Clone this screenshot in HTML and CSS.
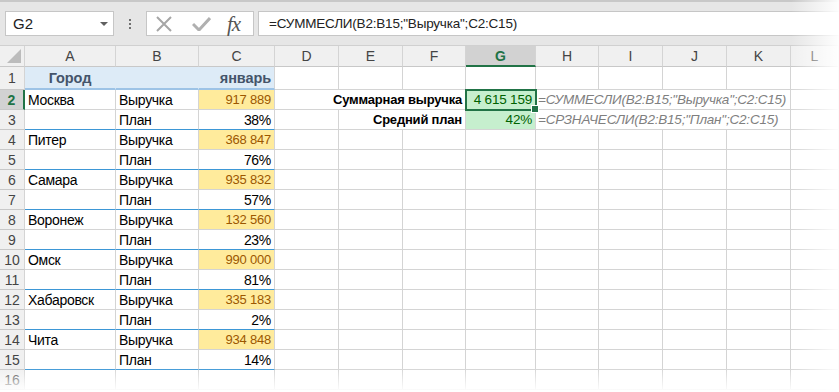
FILE: index.html
```html
<!DOCTYPE html>
<html lang="ru">
<head>
    <meta charset="UTF-8">
    <title>СУММЕСЛИ</title>
    <link rel="stylesheet" href="styles.css">
</head>
<body>
    <div class="toolbar">
        <div class="namebox"><span>G2</span><span class="caret"></span></div>
        <div class="dots"><span></span><span></span><span></span></div>
        <div class="fxbox">
            <svg class="ico" width="18" height="16" viewBox="0 0 18 16"><path d="M2 1 L16 15 M16 1 L2 15" stroke="#a6a6a6" stroke-width="2" fill="none"/></svg>
            <svg class="ico" width="19" height="14" viewBox="0 0 19 14"><path d="M1 7 L7 13 L18 1" stroke="#b0b0b0" stroke-width="3" fill="none"/></svg>
            <span class="fx">fx</span>
        </div>
        <div class="formula">=СУММЕСЛИ(B2:B15;"Выручка";C2:C15)</div>
    </div>

    <div class="sheet">
        <div class="ch corner"></div>
        <div class="ch">A</div><div class="ch">B</div><div class="ch">C</div><div class="ch">D</div><div class="ch">E</div><div class="ch">F</div>
        <div class="ch sel">G</div><div class="ch">H</div><div class="ch">I</div><div class="ch">J</div><div class="ch">K</div><div class="ch">L</div>

        <div class="rh">1</div>
        <div class="c head center">Город</div><div class="c head"></div><div class="c head right">январь</div>
        <div class="c"></div><div class="c"></div><div class="c"></div><div class="c"></div><div class="c"></div><div class="c"></div><div class="c"></div><div class="c"></div><div class="c"></div>

        <div class="rh sel">2</div>
        <div class="c">Москва</div><div class="c">Выручка</div><div class="c rev">917 889</div>
        <div class="c span3 right bold">Суммарная выручка</div>
        <div class="c good active">4 615 159</div>
        <div class="c span4 note">=СУММЕСЛИ(B2:B15;"Выручка";C2:C15)</div>
        <div class="c"></div>

        <div class="rh">3</div>
        <div class="c grp"></div><div class="c grp">План</div><div class="c grp right">38%</div>
        <div class="c"></div>
        <div class="c span2 right bold">Средний план</div>
        <div class="c good">42%</div>
        <div class="c span4 note">=СРЗНАЧЕСЛИ(B2:B15;"План";C2:C15)</div>
        <div class="c"></div>

        <div class="rh">4</div>
        <div class="c">Питер</div><div class="c">Выручка</div><div class="c rev">368 847</div>
        <div class="c"></div><div class="c"></div><div class="c"></div><div class="c"></div><div class="c"></div><div class="c"></div><div class="c"></div><div class="c"></div><div class="c"></div>

        <div class="rh">5</div>
        <div class="c grp"></div><div class="c grp">План</div><div class="c grp right">76%</div>
        <div class="c"></div><div class="c"></div><div class="c"></div><div class="c"></div><div class="c"></div><div class="c"></div><div class="c"></div><div class="c"></div><div class="c"></div>

        <div class="rh">6</div>
        <div class="c">Самара</div><div class="c">Выручка</div><div class="c rev">935 832</div>
        <div class="c"></div><div class="c"></div><div class="c"></div><div class="c"></div><div class="c"></div><div class="c"></div><div class="c"></div><div class="c"></div><div class="c"></div>

        <div class="rh">7</div>
        <div class="c grp"></div><div class="c grp">План</div><div class="c grp right">57%</div>
        <div class="c"></div><div class="c"></div><div class="c"></div><div class="c"></div><div class="c"></div><div class="c"></div><div class="c"></div><div class="c"></div><div class="c"></div>

        <div class="rh">8</div>
        <div class="c">Воронеж</div><div class="c">Выручка</div><div class="c rev">132 560</div>
        <div class="c"></div><div class="c"></div><div class="c"></div><div class="c"></div><div class="c"></div><div class="c"></div><div class="c"></div><div class="c"></div><div class="c"></div>

        <div class="rh">9</div>
        <div class="c grp"></div><div class="c grp">План</div><div class="c grp right">23%</div>
        <div class="c"></div><div class="c"></div><div class="c"></div><div class="c"></div><div class="c"></div><div class="c"></div><div class="c"></div><div class="c"></div><div class="c"></div>

        <div class="rh">10</div>
        <div class="c">Омск</div><div class="c">Выручка</div><div class="c rev">990 000</div>
        <div class="c"></div><div class="c"></div><div class="c"></div><div class="c"></div><div class="c"></div><div class="c"></div><div class="c"></div><div class="c"></div><div class="c"></div>

        <div class="rh">11</div>
        <div class="c grp"></div><div class="c grp">План</div><div class="c grp right">81%</div>
        <div class="c"></div><div class="c"></div><div class="c"></div><div class="c"></div><div class="c"></div><div class="c"></div><div class="c"></div><div class="c"></div><div class="c"></div>

        <div class="rh">12</div>
        <div class="c">Хабаровск</div><div class="c">Выручка</div><div class="c rev">335 183</div>
        <div class="c"></div><div class="c"></div><div class="c"></div><div class="c"></div><div class="c"></div><div class="c"></div><div class="c"></div><div class="c"></div><div class="c"></div>

        <div class="rh">13</div>
        <div class="c grp"></div><div class="c grp">План</div><div class="c grp right">2%</div>
        <div class="c"></div><div class="c"></div><div class="c"></div><div class="c"></div><div class="c"></div><div class="c"></div><div class="c"></div><div class="c"></div><div class="c"></div>

        <div class="rh">14</div>
        <div class="c">Чита</div><div class="c">Выручка</div><div class="c rev">934 848</div>
        <div class="c"></div><div class="c"></div><div class="c"></div><div class="c"></div><div class="c"></div><div class="c"></div><div class="c"></div><div class="c"></div><div class="c"></div>

        <div class="rh">15</div>
        <div class="c grp"></div><div class="c grp">План</div><div class="c grp right">14%</div>
        <div class="c"></div><div class="c"></div><div class="c"></div><div class="c"></div><div class="c"></div><div class="c"></div><div class="c"></div><div class="c"></div><div class="c"></div>

        <div class="rh">16</div>
        <div class="c"></div><div class="c"></div><div class="c"></div><div class="c"></div><div class="c"></div><div class="c"></div><div class="c"></div><div class="c"></div><div class="c"></div><div class="c"></div><div class="c"></div><div class="c"></div>
    </div>

    <div class="fade-right"></div>
    <div class="fade-bottom"></div>
</body>
</html>
```

FILE: styles.css
```css
* {
    box-sizing: border-box;
}
body {
    margin: 0;
    width: 839px;
    height: 392px;
    overflow: hidden;
    position: relative;
    background: #fff;
    font-family: "Liberation Sans", Arial, sans-serif;
    color: #000;
}

/* formula bar */
.toolbar {
    height: 46px;
    background: #e6e6e6;
    border-top: 2px solid #c8c8c8;
    border-bottom: 1px solid #d0d0d0;
    display: flex;
    align-items: flex-start;
    padding: 9px 0 0 5px;
}
.namebox {
    width: 109px;
    height: 25px;
    background: #fff;
    border: 1px solid #c6c6c6;
    display: flex;
    align-items: center;
    justify-content: space-between;
    padding: 0 5px 0 7px;
    font-size: 15px;
    color: #222;
}
.caret {
    border-left: 4px solid transparent;
    border-right: 4px solid transparent;
    border-top: 4px solid #606060;
}
.dots {
    width: 32px;
    height: 25px;
    display: flex;
    flex-direction: column;
    align-items: center;
    justify-content: center;
    gap: 2px;
}
.dots span {
    width: 2px;
    height: 2px;
    background: #707070;
}
.fxbox {
    width: 108px;
    height: 25px;
    background: #fff;
    border: 1px solid #c6c6c6;
    display: flex;
    align-items: center;
    padding-left: 8px;
}
.ico {
    display: block;
}
.fxbox .ico:first-child {
    margin-right: 19px;
}
.fxbox .ico + .ico {
    margin-right: 16px;
}
.fx {
    font-family: "Liberation Serif", serif;
    font-style: italic;
    font-size: 21px;
    color: #555;
    letter-spacing: -1px;
    line-height: 20px;
}
.formula {
    flex: 1;
    height: 25px;
    margin-left: 4px;
    background: #fff;
    border: 1px solid #c6c6c6;
    border-right: none;
    padding-left: 10px;
    font-size: 13.5px;
    letter-spacing: -0.2px;
    line-height: 23px;
    color: #222;
    white-space: nowrap;
}

/* grid */
.sheet {
    display: grid;
    grid-template-columns: 25px 91px 83px 76px 64px 64px 63px 70px 63px 64px 64px 64px 1fr;
    grid-template-rows: 21px 23px repeat(15, 20px);
    font-size: 13px;
}
.ch, .rh {
    background: #f0f0f0;
    color: #444;
    border-right: 1px solid #d4d4d4;
    border-bottom: 1px solid #c8c8c8;
    display: flex;
    align-items: center;
    justify-content: center;
    font-size: 14px;
}
.corner {
    position: relative;
}
.corner::after {
    content: "";
    position: absolute;
    right: 3px;
    bottom: 3px;
    border-left: 14px solid transparent;
    border-bottom: 14px solid #bcbcbc;
}
.ch.sel {
    background: #d2d2d2;
    color: #217346;
    font-weight: bold;
    border-bottom: 2px solid #217346;
}
.rh.sel {
    background: #d2d2d2;
    color: #217346;
    font-weight: bold;
    border-right: 2px solid #217346;
}
.c {
    border-right: 1px solid #d4d4d4;
    border-bottom: 1px solid #d4d4d4;
    display: flex;
    align-items: center;
    padding: 0 3px;
    white-space: nowrap;
    font-size: 14px;
    letter-spacing: -0.3px;
}
.right {
    justify-content: flex-end;
}
.center {
    justify-content: center;
}
.bold {
    font-weight: bold;
    font-size: 13px;
    letter-spacing: -0.2px;
}
.span2 {
    grid-column: span 2;
}
.span3 {
    grid-column: span 3;
}
.span4 {
    grid-column: span 4;
}
.head {
    background: #ddebf7;
    border-right-color: #ddebf7;
    border-bottom: 2px solid #9dc3e6;
    color: #44546a;
    font-weight: bold;
    font-size: 14.5px;
    letter-spacing: -0.1px;
}
.head.right {
    border-right-color: #d4d4d4;
}
.rev {
    background: #ffeb9c;
    color: #9c5700;
    justify-content: flex-end;
    font-size: 13px;
    letter-spacing: -0.2px;
}
.grp {
    border-bottom-color: #3d97d6;
}
.good {
    background: #c6efce;
    color: #006100;
    justify-content: flex-end;
    font-size: 13.5px;
    letter-spacing: -0.2px;
}
.active {
    position: relative;
    outline: 2px solid #217346;
    outline-offset: -1px;
    z-index: 1;
}
.active::after {
    content: "";
    position: absolute;
    right: -4px;
    bottom: -4px;
    width: 6px;
    height: 6px;
    background: #217346;
    border: 1px solid #fff;
}
.note {
    font-style: italic;
    color: #7f7f7f;
    padding-left: 2px;
    font-size: 13.5px;
    letter-spacing: -0.2px;
}

/* torn edge fade */
.fade-right {
    position: absolute;
    top: 0;
    right: 0;
    width: 48px;
    height: 100%;
    background: linear-gradient(to right, rgba(255, 255, 255, 0), rgba(255, 255, 255, 0.95));
}
.fade-bottom {
    position: absolute;
    left: 0;
    bottom: 0;
    width: 100%;
    height: 24px;
    background: linear-gradient(to bottom, rgba(255, 255, 255, 0), #fff);
}
```
